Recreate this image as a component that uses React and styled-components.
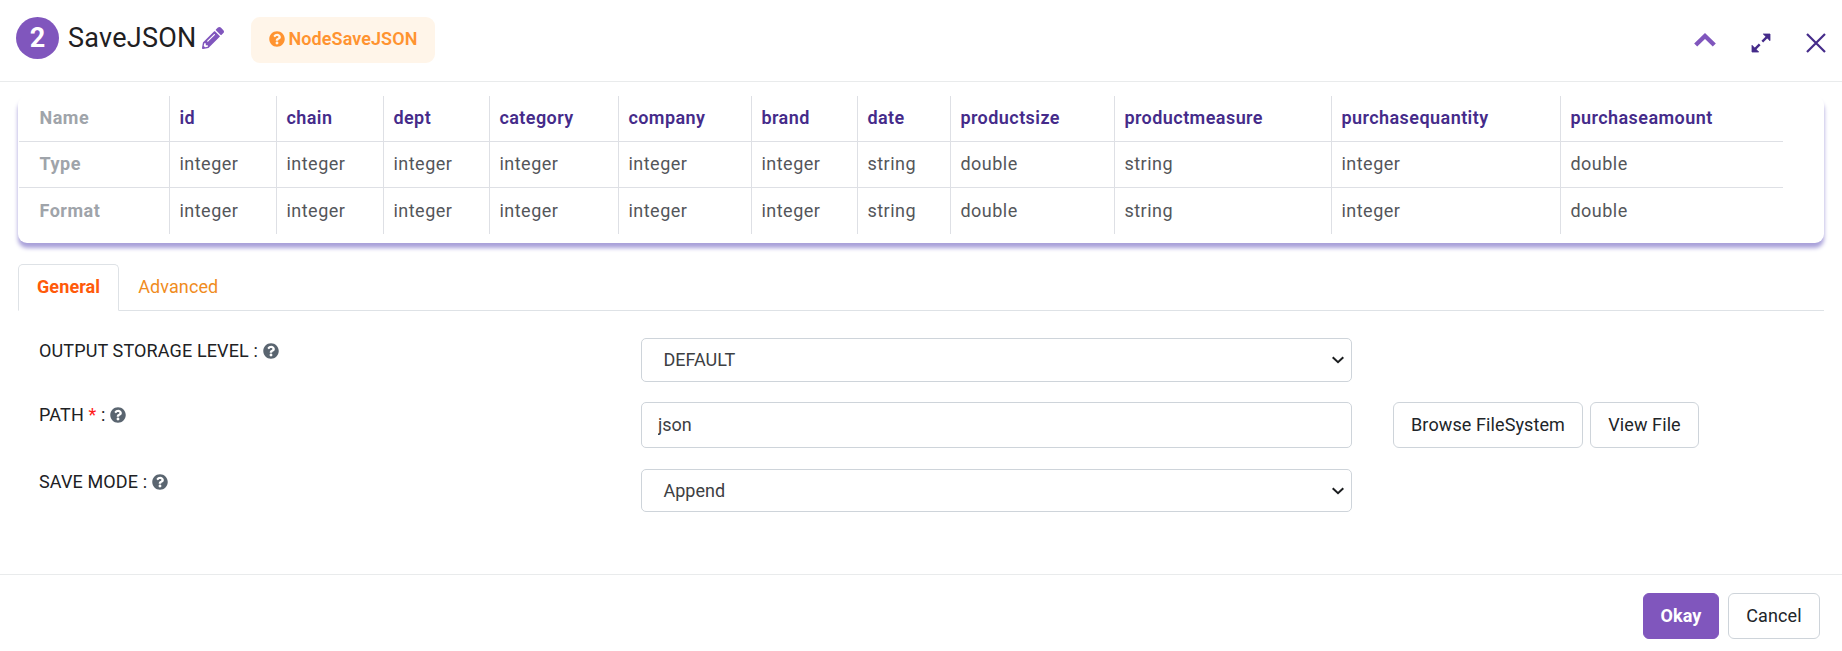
import React from "react";
import styled, { createGlobalStyle } from "styled-components";
import { FaPencilAlt, FaQuestionCircle } from "react-icons/fa";

const GlobalStyle = createGlobalStyle`
  * { box-sizing: border-box; }
  body {
    margin: 0;
    background: #fff;
    color: #212529;
    font: 400 18px/27px Roboto, "Liberation Sans", sans-serif;
  }
  button, input { font: inherit; color: inherit; letter-spacing: inherit; }
`;

const Dialog = styled.div`
  display: flex;
  flex-direction: column;
  height: 651px;
  background: #fff;
`;

const Header = styled.header`
  display: flex;
  align-items: flex-start;
  height: 82px;
  padding: 17px 16px 0;
  border-bottom: 1px solid #e9ebec;
`;

const StepNumber = styled.div`
  width: 43px;
  height: 42px;
  border-radius: 50%;
  background: #8056bd;
  color: #fff;
  font-size: 27px;
  font-weight: 700;
  line-height: 42px;
  text-align: center;
`;

const Title = styled.h1`
  margin: 0 0 0 9px;
  width: 134px;
  font-size: 27px;
  font-weight: 400;
  line-height: 42px;
  letter-spacing: 0.25px;
  color: #1f2022;
`;

const EditIcon = styled(FaPencilAlt)`
  width: 22px;
  height: 22px;
  margin-top: 10px;
  color: #8056bd;
`;

const NodeBadge = styled.div`
  display: flex;
  align-items: center;
  gap: 4px;
  width: 184px;
  height: 46px;
  margin-left: 27px;
  padding: 0 0 3px 17.500px;
  border-radius: 9px;
  background: #fff5e9;
  color: #ff9330;
  font-weight: 600;
  letter-spacing: 0.08px;
  svg { width: 16px; height: 16px; }
`;

const WindowActions = styled.div`
  display: flex;
  align-items: center;
  margin: 15px 0 0 auto;
  gap: 35px;
`;

const ActionButton = styled.button`
  display: flex;
  padding: 0;
  border: 0;
  background: none;
`;

const SchemaPanel = styled.section`
  height: 147px;
  margin: 14px 18px 0;
  padding-right: 41px;
  border-radius: 9px;
  box-shadow: 0 5px 4px 0 #a9a1da;
`;

const SchemaTable = styled.table`
  table-layout: fixed;
  width: 1764px;
  margin-left: 1px;
  border-collapse: separate;
  border-spacing: 0;
  letter-spacing: 0.5px;
  color: #54565a;
`;

const Cell = styled.td`
  height: 46px;
  padding: 0 0 2px 9.400px;
  border-left: 1px solid #dee0e5;
  border-bottom: 1px solid #dee0e5;
  font-weight: ${(p) => (p.$name ? 600 : 400)};
  letter-spacing: ${(p) => (p.$name ? 0.44 : 0.5)}px;
  color: ${(p) => (p.$name ? "#452b8a" : "inherit")};
  tr:last-child > & { border-bottom: 0; }
`;

const RowLabel = styled.th`
  height: 46px;
  padding: 0 0 2px 20.500px;
  border-bottom: 1px solid #dee0e5;
  font-weight: 700;
  text-align: left;
  color: #9fa4aa;
  tr:last-child > & { border-bottom: 0; }
`;

const Tabs = styled.nav`
  display: flex;
  height: 47px;
  margin: 21px 18px 0;
  border-bottom: 1px solid #dee2e6;
`;

const Tab = styled.button`
  height: 47px;
  padding: 0 18px 3px;
  border: 1px solid ${(p) => (p.$active ? "#dee2e6" : "transparent")};
  border-bottom-color: ${(p) => (p.$active ? "#fff" : "transparent")};
  border-radius: 5px 5px 0 0;
  background: ${(p) => (p.$active ? "#fff" : "transparent")};
  color: ${(p) => (p.$active ? "#ff5a0a" : "#f08c1e")};
  font-weight: ${(p) => (p.$active ? 700 : 400)};
  letter-spacing: 0.1px;
`;

const Form = styled.form`
  display: grid;
  grid-template-columns: 602px 711px auto;
  grid-template-rows: 64px 67px 43px;
  margin: 27px 0 0 39px;
  flex: 1;
`;

const Label = styled.label`
  display: flex;
  align-items: center;
  height: 25px;
  gap: 5px;
  color: #202124;
  letter-spacing: 0.13px;
  svg { width: 16px; height: 16px; color: #5a6570; }
`;

const Required = styled.span`
  color: #ff1a1a;
`;

const Field = styled.div`
  display: flex;
  align-items: center;
  justify-content: space-between;
  height: ${(p) => p.$height}px;
  padding: 0 7px 0 21.500px;
  border: 1px solid #ced4da;
  border-radius: 5px;
  color: #3d4043;
`;

const Value = styled.span`
  padding-bottom: 1px;
`;

const TextInput = styled.input`
  height: 46px;
  width: 100%;
  padding: 0 16px 2px;
  border: 1px solid #ced4da;
  border-radius: 5px;
  outline: 0;
  color: #3d4043;
`;

const Actions = styled.div`
  display: flex;
  gap: 7px;
  padding-left: 41px;
`;

const Button = styled.button`
  width: ${(p) => p.$width}px;
  height: 46px;
  padding: 0 0 2px;
  border: 1px solid ${(p) => (p.$primary ? "#8056bd" : "#ced4da")};
  border-radius: 6px;
  background: ${(p) => (p.$primary ? "#8056bd" : "#fff")};
  color: ${(p) => (p.$primary ? "#fff" : "#212529")};
  font-weight: ${(p) => (p.$primary ? 700 : 400)};
  letter-spacing: 0.1px;
`;

const Footer = styled.footer`
  display: flex;
  justify-content: flex-end;
  gap: 9px;
  height: 77px;
  padding: 18px 22px 0;
  border-top: 1px solid #e9ebec;
`;

const columns = [
  ["id", "integer", 107],
  ["chain", "integer", 107],
  ["dept", "integer", 106],
  ["category", "integer", 129],
  ["company", "integer", 133],
  ["brand", "integer", 106],
  ["date", "string", 93],
  ["productsize", "double", 164],
  ["productmeasure", "string", 217],
  ["purchasequantity", "integer", 229],
  ["purchaseamount", "double", 223],
];

function SelectField({ height, value }) {
  return (
    <Field $height={height} role="combobox" aria-expanded="false">
      <Value>{value}</Value>
      <svg width="12" height="8" viewBox="0 0 12 8" fill="none" stroke="#1b1d1f" strokeWidth="2">
        <path d="M.7 1.2 6 6.2l5.300-5" />
      </svg>
    </Field>
  );
}

export default function App() {
  return (
    <Dialog>
      <GlobalStyle />
      <Header>
        <StepNumber>2</StepNumber>
        <Title>SaveJSON</Title>
        <EditIcon />
        <NodeBadge><FaQuestionCircle />NodeSaveJSON</NodeBadge>
        <WindowActions>
          <ActionButton aria-label="Collapse">
            <svg width="22" height="22" viewBox="0 0 22 22" fill="none" stroke="#8056bd" strokeWidth="4.4">
              <path d="M1.700 13 11 4l9.300 9" />
            </svg>
          </ActionButton>
          <ActionButton aria-label="Expand">
            <svg width="20" height="20" viewBox="0 0 20 20" fill="#452b8a" stroke="#452b8a">
              <path d="M12.300 1H19v6.700ZM1 12.300V19h6.700Z" strokeWidth=".8" />
              <path d="m11.300 8.700 5-5M8.700 11.300l-5 5" strokeWidth="2.400" />
            </svg>
          </ActionButton>
          <ActionButton aria-label="Close">
            <svg width="20" height="20" viewBox="0 0 20 20" fill="none" stroke="#452b8a" strokeWidth="2.2">
              <path d="m1 1 18 18M19 1 1 19" />
            </svg>
          </ActionButton>
        </WindowActions>
      </Header>
      <SchemaPanel>
        <SchemaTable>
          <colgroup>
            <col width="150" />
            {columns.map(([name, , width]) => <col key={name} width={width} />)}
          </colgroup>
          <tbody>
            <tr>
              <RowLabel>Name</RowLabel>
              {columns.map(([name]) => <Cell key={name} $name>{name}</Cell>)}
            </tr>
            {["Type", "Format"].map((label) => (
              <tr key={label}>
                <RowLabel>{label}</RowLabel>
                {columns.map(([name, type]) => <Cell key={name}>{type}</Cell>)}
              </tr>
            ))}
          </tbody>
        </SchemaTable>
      </SchemaPanel>
      <Tabs>
        <Tab $active>General</Tab>
        <Tab>Advanced</Tab>
      </Tabs>
      <Form>
        <Label>OUTPUT STORAGE LEVEL : <FaQuestionCircle /></Label>
        <SelectField height={44} value="DEFAULT" />
        <span />
        <Label><span>PATH <Required>*</Required> :</span> <FaQuestionCircle /></Label>
        <TextInput defaultValue="json" />
        <Actions>
          <Button type="button" $width={190}>Browse FileSystem</Button>
          <Button type="button" $width={109}>View File</Button>
        </Actions>
        <Label>SAVE MODE : <FaQuestionCircle /></Label>
        <SelectField height={43} value="Append" />
      </Form>
      <Footer>
        <Button $primary $width={76}>Okay</Button>
        <Button $width={92}>Cancel</Button>
      </Footer>
    </Dialog>
  );
}
